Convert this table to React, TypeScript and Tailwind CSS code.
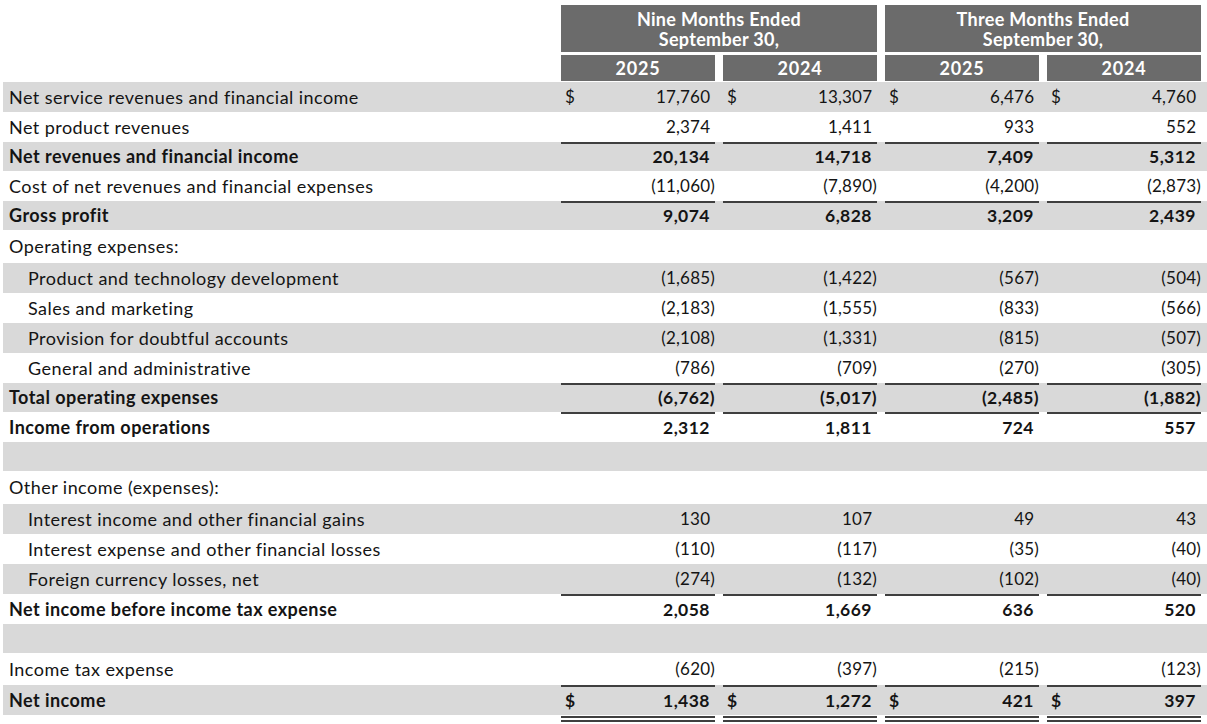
import React from "react";

type Row = {
  label?: string;
  vals?: string[];
  gray?: boolean;
  bold?: boolean;
  indent?: boolean;
  dollar?: boolean;
  top?: boolean;
  h: string;
  dbl?: boolean;
};

const rows: Row[] = [
  { label: "Net service revenues and financial income", vals: ["17,760", "13,307", "6,476", "4,760"], gray: true, dollar: true, h: "h-[30px]" },
  { label: "Net product revenues", vals: ["2,374", "1,411", "933", "552"], h: "h-[30px]" },
  { label: "Net revenues and financial income", vals: ["20,134", "14,718", "7,409", "5,312"], gray: true, bold: true, top: true, h: "h-[29px]" },
  { label: "Cost of net revenues and financial expenses", vals: ["(11,060)", "(7,890)", "(4,200)", "(2,873)"], h: "h-[30px]" },
  { label: "Gross profit", vals: ["9,074", "6,828", "3,209", "2,439"], gray: true, bold: true, top: true, h: "h-[29px]" },
  { label: "Operating expenses:", h: "h-[33px]" },
  { label: "Product and technology development", vals: ["(1,685)", "(1,422)", "(567)", "(504)"], gray: true, indent: true, h: "h-[30px]" },
  { label: "Sales and marketing", vals: ["(2,183)", "(1,555)", "(833)", "(566)"], indent: true, h: "h-[30px]" },
  { label: "Provision for doubtful accounts", vals: ["(2,108)", "(1,331)", "(815)", "(507)"], gray: true, indent: true, h: "h-[30px]" },
  { label: "General and administrative", vals: ["(786)", "(709)", "(270)", "(305)"], indent: true, h: "h-[30px]" },
  { label: "Total operating expenses", vals: ["(6,762)", "(5,017)", "(2,485)", "(1,882)"], gray: true, bold: true, top: true, h: "h-[29px]" },
  { label: "Income from operations", vals: ["2,312", "1,811", "724", "557"], bold: true, top: true, h: "h-[30px]" },
  { gray: true, h: "h-[29px]" },
  { label: "Other income (expenses):", h: "h-[33px]" },
  { label: "Interest income and other financial gains", vals: ["130", "107", "49", "43"], gray: true, indent: true, h: "h-[30px]" },
  { label: "Interest expense and other financial losses", vals: ["(110)", "(117)", "(35)", "(40)"], indent: true, h: "h-[30px]" },
  { label: "Foreign currency losses, net", vals: ["(274)", "(132)", "(102)", "(40)"], gray: true, indent: true, h: "h-[30px]" },
  { label: "Net income before income tax expense", vals: ["2,058", "1,669", "636", "520"], bold: true, top: true, h: "h-[30px]" },
  { gray: true, h: "h-[29px]" },
  { label: "Income tax expense", vals: ["(620)", "(397)", "(215)", "(123)"], h: "h-[32px]" },
  { label: "Net income", vals: ["1,438", "1,272", "421", "397"], gray: true, bold: true, top: true, dollar: true, dbl: true, h: "h-[30px]" },
];

const grid = "grid grid-cols-[550px_154px_154px_154px_154px] gap-x-[8px]";

function Num({ v }: { v: string }) {
  const neg = v.endsWith(")");
  return (
    <span>
      {v}
      {!neg && <span className="invisible">)</span>}
    </span>
  );
}

export default function App() {
  return (
    <div
      className="w-[1207px] h-[724px] overflow-hidden bg-white pl-[3px] text-[#141414]"
      style={{ fontFamily: "Lato, 'Liberation Sans', sans-serif" }}
    >
      {/* header */}
      <div className={`${grid} pt-[5px]`}>
        <div />
        <div className="col-span-2 h-[47px] bg-[#6b6b6b] text-white font-bold text-[18px] tracking-[0.3px] leading-[20px] flex flex-col items-center justify-center">
          <span>Nine Months Ended</span>
          <span>September 30,</span>
        </div>
        <div className="col-span-2 h-[47px] bg-[#6b6b6b] text-white font-bold text-[18px] tracking-[0.3px] leading-[20px] flex flex-col items-center justify-center">
          <span>Three Months Ended</span>
          <span>September 30,</span>
        </div>
      </div>
      <div className={`${grid} pt-[3px] pb-[1px]`}>
        <div />
        {["2025", "2024", "2025", "2024"].map((y, i) => (
          <div key={i} className="h-[26px] bg-[#6b6b6b] text-white font-bold text-[18px] tracking-[0.8px] flex items-center justify-center">
            {y}
          </div>
        ))}
      </div>
      {rows.map((r, i) => (
        <React.Fragment key={i}>
          <div className={`${grid} ${r.h} ${r.gray ? "bg-[#d9d9d9]" : ""}`}>
            <div
              className={`flex items-center text-[18px] tracking-[0.45px] ${r.indent ? "pl-[25px]" : "pl-[6px]"} ${r.bold ? "font-bold" : ""}`}
            >
              {r.label}
            </div>
            {r.vals
              ? r.vals.map((v, j) => (
                  <div
                    key={j}
                    className={`flex items-center justify-between pl-[4px] ${r.top ? "border-t-2 border-[#3f3f3f]" : ""} ${r.bold ? "font-bold text-[17.5px] tracking-[0.4px]" : "text-[17px] tracking-[0.2px]"}`}
                  >
                    <span>{r.dollar ? "$" : ""}</span>
                    <Num v={v} />
                  </div>
                ))
              : [0, 1, 2, 3].map((j) => <div key={j} />)}
          </div>
          {r.dbl && (
            <div className={`${grid} pt-[1px]`}>
              <div />
              {[0, 1, 2, 3].map((j) => (
                <div key={j} className="h-[6px] border-t-2 border-b-2 border-[#3f3f3f]" />
              ))}
            </div>
          )}
        </React.Fragment>
      ))}
    </div>
  );
}
